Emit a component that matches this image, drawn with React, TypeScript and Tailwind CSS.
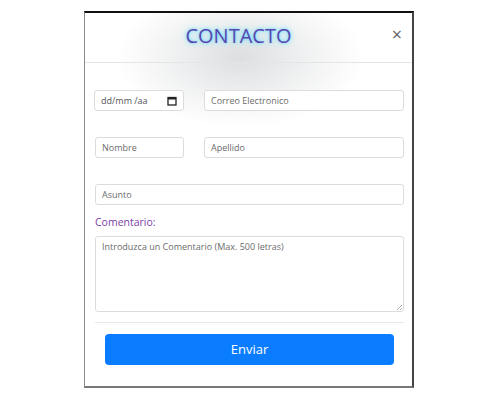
import React from "react";

export default function App() {
  const inputCls =
    "h-[21px] border border-[#dcdcdc] rounded-[3px] bg-white flex items-center px-[6px] text-[9px] text-[#6b6b6b]";
  return (
    <div className="w-[500px] h-[400px] bg-white" style={{ fontFamily: '"Open Sans", "Noto Sans", sans-serif' }}>
      <div className="pt-[11px] pl-[84px]">
        <div className="relative w-[330px] h-[377px] bg-white border-t-2 border-t-[#111] border-l border-l-[#888] border-r-2 border-r-[#444] border-b-2 border-b-[#777] overflow-hidden">
          <div className="absolute left-[30px] top-[-25px] w-[250px] h-[140px] bg-[radial-gradient(ellipse_at_center,rgba(120,130,135,0.26),rgba(160,165,170,0.12)_45%,transparent_70%)] pointer-events-none" />
          <div className="relative h-[50px] border-b border-[#e5e5e5] flex items-center justify-center pb-[4px]">
            <span
              className="text-[20px] text-[#5b46b0] mr-[20px]"
              style={{ textShadow: "0 0 3px #4fd8ff, 0 0 7px #7fe4ff" }}
            >
              CONTACTO
            </span>
            <span className="absolute right-[10px] top-[12px] text-[18px] text-[#666] leading-none">×</span>
          </div>
          <div className="relative pl-[10px] pr-[8px] pt-[27px]">
            <div className="flex gap-[20px]">
              <div className={inputCls + " w-[90px] justify-between -ml-[1px] text-[#555]"}>
                <span>dd/mm /aa</span>
                <svg width="10" height="10" viewBox="0 0 10 10">
                  <rect x="1" y="1.5" width="8" height="7.5" fill="none" stroke="#222" strokeWidth="1.3" />
                  <rect x="1" y="1.5" width="8" height="2" fill="#222" />
                </svg>
              </div>
              <div className={inputCls + " flex-1"}>Correo Electronico</div>
            </div>
            <div className="flex gap-[20px] mt-[26px]">
              <div className={inputCls + " w-[89px]"}>Nombre</div>
              <div className={inputCls + " flex-1"}>Apellido</div>
            </div>
            <div className={inputCls + " mt-[26px]"}>Asunto</div>
            <div className="mt-[10px] text-[10.5px] text-[#7b3fa8]">Comentario:</div>
            <div className="relative mt-[5px] h-[76px] border border-[#dcdcdc] rounded-[3px] px-[6px] pt-[3px] text-[9px] text-[#6b6b6b]">
              Introduzca un Comentario (Max. 500 letras)
              <svg className="absolute right-[1px] bottom-[1px]" width="6" height="6" viewBox="0 0 6 6">
                <path d="M6 1L1 6M6 4L4 6" stroke="#999" strokeWidth="0.8" />
              </svg>
            </div>
            <div className="mt-[10px] border-t border-[#e8e8e8]" />
            <div className="px-[10px] pt-[11px]">
              <button className="w-full h-[31px] bg-[#0a7cff] rounded-[4px] text-white text-[13px]">Enviar</button>
            </div>
          </div>
        </div>
      </div>
    </div>
  );
}
